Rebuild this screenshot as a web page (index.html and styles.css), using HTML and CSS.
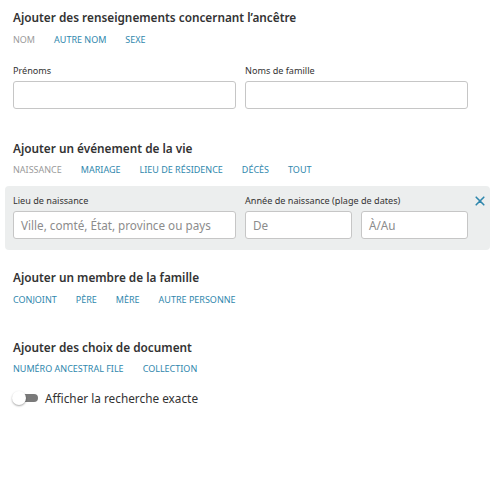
FILE: index.html
```html
<!DOCTYPE html>
<html lang="fr">
<head>
<meta charset="utf-8">
<link rel="stylesheet" href="styles.css">
</head>
<body>
<main class="page">
  <section class="block block-first">
    <h2 class="title">Ajouter des renseignements concernant l’ancêtre</h2>
    <nav class="tabs">
      <span class="tab active">NOM</span>
      <span class="tab">AUTRE NOM</span>
      <span class="tab">SEXE</span>
    </nav>
    <div class="fields">
      <label class="field">
        <span class="label">Prénoms</span>
        <span class="input"></span>
      </label>
      <label class="field">
        <span class="label">Noms de famille</span>
        <span class="input"></span>
      </label>
    </div>
  </section>

  <section class="block block-event">
    <h2 class="title">Ajouter un événement de la vie</h2>
    <nav class="tabs">
      <span class="tab active">NAISSANCE</span>
      <span class="tab">MARIAGE</span>
      <span class="tab">LIEU DE RÉSIDENCE</span>
      <span class="tab">DÉCÈS</span>
      <span class="tab">TOUT</span>
    </nav>
    <div class="panel">
      <div class="fields">
        <label class="field">
          <span class="label">Lieu de naissance</span>
          <span class="input placeholder">Ville, comté, État, province ou pays</span>
        </label>
        <div class="field">
          <span class="label">Année de naissance (plage de dates)</span>
          <div class="range">
            <span class="input placeholder">De</span>
            <span class="input placeholder">À/Au</span>
          </div>
        </div>
      </div>
      <button class="close" aria-label="Fermer">
        <svg width="10" height="10" viewBox="0 0 10 10"><path d="M1.2 1.2 L8.8 8.8 M8.8 1.2 L1.2 8.8" stroke="#2f87ad" stroke-width="1.6" stroke-linecap="round"/></svg>
      </button>
    </div>
  </section>

  <section class="block block-family">
    <h2 class="title">Ajouter un membre de la famille</h2>
    <nav class="tabs">
      <span class="tab">CONJOINT</span>
      <span class="tab">PÈRE</span>
      <span class="tab">MÈRE</span>
      <span class="tab">AUTRE PERSONNE</span>
    </nav>
  </section>

  <section class="block block-doc">
    <h2 class="title">Ajouter des choix de document</h2>
    <nav class="tabs">
      <span class="tab">NUMÉRO ANCESTRAL FILE</span>
      <span class="tab">COLLECTION</span>
    </nav>
    <div class="toggle-row">
      <span class="toggle"><span class="track"></span><span class="knob"></span></span>
      <span class="toggle-label">Afficher la recherche exacte</span>
    </div>
  </section>
</main>
</body>
</html>
```

FILE: styles.css
```css
* { box-sizing: border-box; }
html, body { margin: 0; padding: 0; background: #fff; }
body {
  font-family: "Noto Sans", "Open Sans", sans-serif;
  color: #333;
  width: 500px;
  height: 495px;
  overflow: hidden;
}
.page { padding: 9px 0 0 0; }
.block { padding-left: 13px; }
.title {
  margin: 0;
  font-size: 11.8px;
  line-height: 16px;
  font-weight: 600;
  color: #333;
}
.tabs {
  display: flex;
  gap: 19px;
  margin-top: 8px;
  font-size: 9px;
  line-height: 14px;
  color: #2f87ad;
}
.tab.active { color: #9a9a9a; }
.fields {
  display: grid;
  grid-template-columns: 223px 223px;
  column-gap: 9px;
  margin-top: 17px;
}
.field { display: flex; flex-direction: column; }
.label {
  font-size: 9.1px;
  line-height: 14px;
  color: #333;
  margin-bottom: 3px;
}
.input {
  display: block;
  height: 28px;
  border: 1px solid #c6c6c6;
  border-radius: 3px;
  background: #fff;
  font-size: 11.7px;
  line-height: 26px;
  padding: 0 7px;
  white-space: nowrap;
  overflow: hidden;
}
.placeholder { color: #8c8c8c; }
.range {
  display: grid;
  grid-template-columns: 107px 107px;
  column-gap: 9px;
}
.block-event { margin-top: 31px; }
.block-event .tabs { margin-top: 7px; }
.panel {
  display: flex;
  justify-content: space-between;
  margin: 9px 10px 0 -8px;
  padding: 8px 5px 11px 8px;
  background: #eceeee;
  border-radius: 4px;
}
.panel .fields { margin-top: 0; }
.close {
  border: 0;
  background: transparent;
  padding: 0;
  margin-top: 2px;
  width: 10px;
  height: 10px;
  display: flex;
  cursor: pointer;
}
.block-family { margin-top: 19px; }
.block-doc { margin-top: 32px; }
.block-doc .tabs { margin-top: 7px; }
.toggle-row {
  display: flex;
  align-items: center;
  margin-top: 13px;
  margin-left: -1px;
  height: 18px;
}
.toggle {
  position: relative;
  width: 27px;
  height: 16px;
  margin-right: 6px;
}
.track {
  position: absolute;
  left: 5px;
  top: 4px;
  width: 21px;
  height: 8px;
  border-radius: 4px;
  background: #7a7a7a;
}
.knob {
  position: absolute;
  left: 0;
  top: 1px;
  width: 14px;
  height: 14px;
  border-radius: 50%;
  background: #fff;
  box-shadow: 0 1px 2px rgba(0,0,0,0.35);
}
.toggle-label {
  font-size: 11.8px;
  line-height: 18px;
  color: #333;
}
```
